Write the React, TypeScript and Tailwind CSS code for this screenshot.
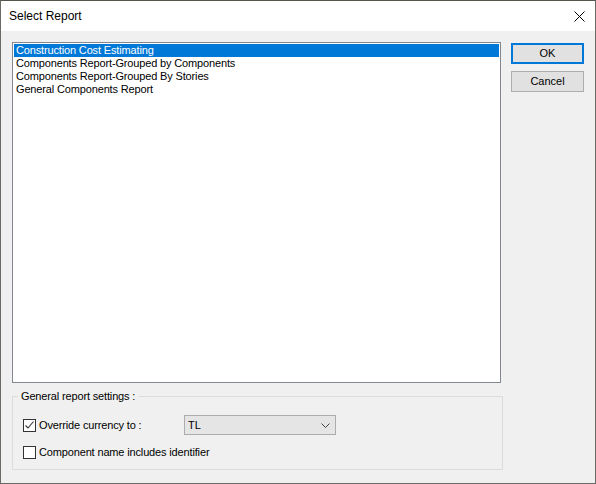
import React, { useState } from 'react';

const reports = [
  'Construction Cost Estimating',
  'Components Report-Grouped by Components',
  'Components Report-Grouped By Stories',
  'General Components Report',
];

function CheckBox({ checked, label }: { checked: boolean; label: string }) {
  return (
    <div className="flex items-center h-[13px]">
      <div className="w-[13px] h-[13px] border border-[#333333] bg-white flex items-center justify-center">
        {checked && (
          <svg width="11" height="11" viewBox="0 0 11 11">
            <path d="M1.5 5.5 L4 8 L9.5 1.5" fill="none" stroke="#333333" strokeWidth="1.1" />
          </svg>
        )}
      </div>
      <span className="ml-[3px] text-[11px] leading-[13px] tracking-[-0.15px] text-black">{label}</span>
    </div>
  );
}

export default function App() {
  const [selected, setSelected] = useState(0);

  return (
    <div
      className="w-[596px] h-[484px] flex flex-col bg-[#f0f0f0] border border-[#6b6b66] border-t-[#55554d]"
      style={{ fontFamily: '"Liberation Sans", Arial, sans-serif' }}
    >
      {/* Title bar */}
      <div className="h-[30px] bg-white flex items-center justify-between shrink-0">
        <span className="ml-[8px] text-[12px] text-black">Select Report</span>
        <svg width="11" height="11" viewBox="0 0 11 11" className="mr-[10px]">
          <path d="M0.5 0.5 L10.5 10.5 M10.5 0.5 L0.5 10.5" stroke="#000" strokeWidth="1" />
        </svg>
      </div>

      <div className="flex flex-col pl-[11px] pt-[11px]">
        <div className="flex">
          {/* Report list */}
          <div className="w-[489px] h-[341px] border border-[#828790] bg-white p-[1px]">
            {reports.map((r, i) => (
              <div
                key={r}
                onClick={() => setSelected(i)}
                className={
                  'h-[13px] pl-[2px] text-[11px] leading-[13px] tracking-[-0.15px] whitespace-nowrap ' +
                  (i === selected ? 'bg-[#0078d7] text-white' : 'text-black')
                }
              >
                {r}
              </div>
            ))}
          </div>

          {/* Buttons */}
          <div className="ml-[10px] flex flex-col gap-[7px] pt-[1px]">
            <button className="w-[73px] h-[21px] border-2 border-[#0078d7] bg-[#e1e1e1] text-[11px] text-black flex items-center justify-center">
              OK
            </button>
            <button className="w-[73px] h-[21px] border border-[#adadad] bg-[#e1e1e1] text-[11px] text-black flex items-center justify-center">
              Cancel
            </button>
          </div>
        </div>

        {/* General report settings */}
        <div className="relative mt-[13px] w-[491px] h-[74px] border border-[#dcdcdc] pl-[10px] pt-[18px]">
          <span className="absolute left-[5px] top-[-7px] px-[3px] bg-[#f0f0f0] text-[11px] leading-[13px] tracking-[-0.15px] text-black">
            General report settings :
          </span>
          <div className="flex items-center h-[20px]">
            <div className="w-[161px]">
              <CheckBox checked label="Override currency to :" />
            </div>
            <div className="w-[152px] h-[20px] border border-[#adadad] bg-[#e5e5e5] flex items-center justify-between pl-[3px] pr-[5px]">
              <span className="text-[11px] text-black">TL</span>
              <svg width="9" height="5" viewBox="0 0 9 5">
                <path d="M0.5 0.5 L4.5 4.5 L8.5 0.5" fill="none" stroke="#444" strokeWidth="1" />
              </svg>
            </div>
          </div>
          <div className="mt-[11px]">
            <CheckBox checked={false} label="Component name includes identifier" />
          </div>
        </div>
      </div>
    </div>
  );
}
